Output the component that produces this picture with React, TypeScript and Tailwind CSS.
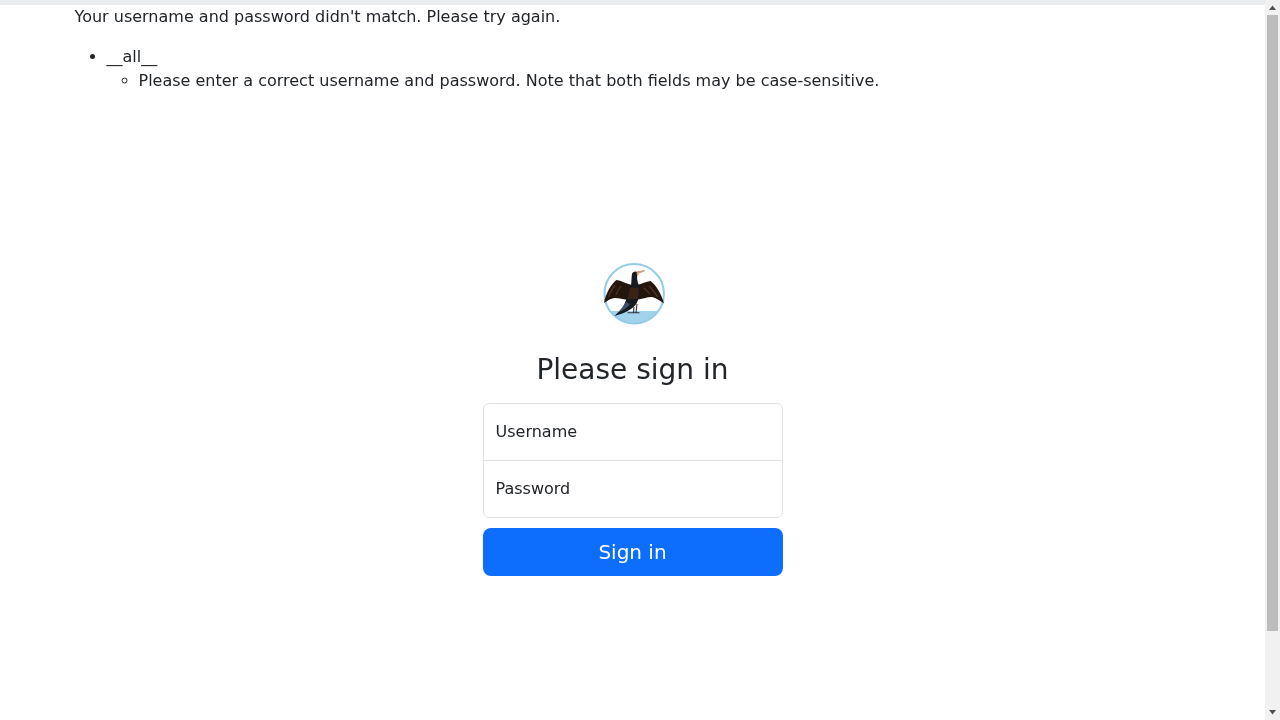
export default function App() {
  return (
    <div className="font-['DejaVu_Sans',sans-serif] text-base leading-6 text-[#212529] bg-white h-[720px] flex overflow-hidden">
      <main className="flex-1 min-w-0 will-change-transform">
        <div className="h-[5px] bg-[#e9ecef]" />
        <div className="mx-auto w-[1140px] px-3">
          <p className="mb-4">Your username and password didn't match. Please try again.</p>
          <ul className="list-disc pl-8 mb-4">
            <li>
              __all__
              <ul className="list-[circle] pl-8">
                <li>Please enter a correct username and password. Note that both fields may be case-sensitive.</li>
              </ul>
            </li>
          </ul>
        </div>
        <form className="w-[300px] mx-auto mt-[169px] flex flex-col items-center">
          <svg width="64" height="64" viewBox="0 0 64 64" className="block">
            <defs>
              <clipPath id="c"><circle cx="33.200" cy="31.700" r="29.700" /></clipPath>
              <filter id="b" x="-10%" y="-10%" width="120%" height="120%">
                <feGaussianBlur stdDeviation="0.4" />
              </filter>
            </defs>
            <g clipPath="url(#c)">
              <rect width="64" height="64" fill="#fff" />
              <rect y="49" width="64" height="15" fill="#a3d3ec" />
            </g>
            <circle cx="33.200" cy="31.700" r="29.700" fill="none" stroke="#93cce6" strokeWidth="2" />
            <g filter="url(#b)">
              <path d="M31 23 C25 21.500 20 18.500 15.500 18 C10 22 5 31 3 41 C7 38.500 10 36 14 36 C18 36 24 38 31 38 Z" fill="#24140f" />
              <path d="M36 23 C41 22 45 19.500 49.500 19 C55 23 60.500 32 63 41.500 C59 39 55 35.500 51 35 C46 35 41 37 35 38 Z" fill="#24140f" />
              <path d="M14 23 C11 27 9 31 7.500 35 M20 24 C18 27 16 30 15 33 M48 24 C51 27 54 31 57 35 M43 26 C45 28 47 30 49 32" stroke="#4f3224" strokeWidth="1.300" fill="none" />
              <path d="M30 24 C30.500 19 30.500 15 31 12 C31.500 9.500 35 8.500 36.500 10.500 C35.500 14 36 19 38 24 C39 30 38.500 34 37 38 C36 42 33 45 30 47 C26 50 20 52 13.500 54 C17 50.500 21 47 23 43 C25 38 28 32 30 24 Z" fill="#161a22" />
              <path d="M29 26 L37.500 26 C38 30 37.500 33 36.500 37 L26.500 37 Z" fill="#3a2318" />
              <path d="M25 40 C23 44 20 47 17.500 50 C22 49 26 46 29 42 Z" fill="#3f5068" />
              <path d="M35 9.500 L43.800 8 L43.800 9.300 L37 12 Z" fill="#c7a080" />
              <path d="M35.500 11 L38 12 L36.500 14.500 Z" fill="#d8a83f" />
              <path d="M33 45 L32.500 50.500 M36 42 L35 50.500 M26.500 50.800 L38.500 50.800" stroke="#2b3038" strokeWidth="1.100" fill="none" />
            </g>
          </svg>
          <h1 className="mt-[27px] mb-4 text-[28px] leading-[33.6px] font-normal text-center">Please sign in</h1>
          <div className="w-full">
            <input
              placeholder="Username"
              className="block w-full h-[58px] px-3 border border-[#dee2e6] rounded-t-md bg-white placeholder:text-[#212529] outline-none"
            />
            <input
              placeholder="Password"
              type="password"
              className="block w-full h-[58px] -mt-px px-3 border border-[#dee2e6] rounded-b-md bg-white placeholder:text-[#212529] outline-none"
            />
          </div>
          <button
            type="button"
            className="w-full h-12 mt-2.5 rounded-lg bg-[#0d6efd] text-white text-xl leading-[30px]"
          >
            Sign in
          </button>
        </form>
      </main>
      <aside className="w-[15px] shrink-0 bg-[#f1f1f1] flex flex-col items-center">
        <svg width="15" height="15" viewBox="0 0 15 15" className="shrink-0">
          <path d="M7.500 5.500 L11 10 L4 10 Z" fill="#505050" />
        </svg>
        <div className="w-[11px] h-[616px] bg-[#bcbcbc] shrink-0" />
        <div className="flex-1" />
        <svg width="15" height="15" viewBox="0 0 15 15" className="shrink-0">
          <path d="M7.500 9.500 L11 5 L4 5 Z" fill="#505050" />
        </svg>
      </aside>
    </div>
  );
}
